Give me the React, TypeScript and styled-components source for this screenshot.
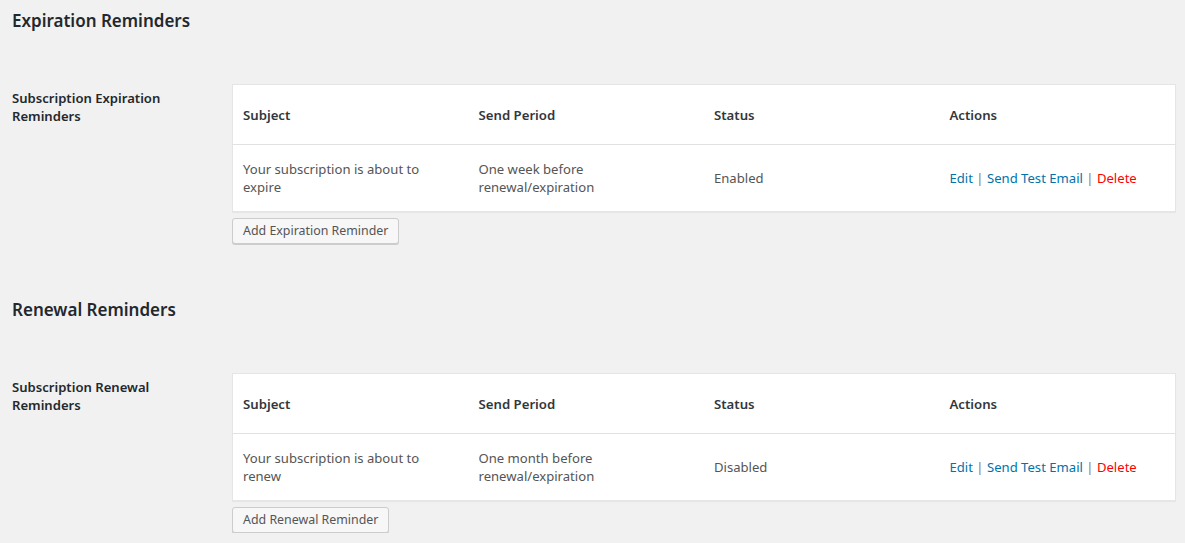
import React from "react";
import styled, { createGlobalStyle } from "styled-components";

const Global = createGlobalStyle`
  html, body { margin: 0; padding: 0; background: #f1f1f1; }
  body { font-family: "Segoe UI", "Noto Sans", "Open Sans", sans-serif; color: #444; }
`;

const Page = styled.div`
  padding: 9px 9px 0 12px;
  display: flex;
  flex-direction: column;
  gap: 54px;
`;

const Section = styled.section`
  display: flex;
  flex-direction: column;
  gap: 51px;
`;

const Heading = styled.h2`
  margin: 0;
  font-size: 17px;
  line-height: 24px;
  font-weight: 600;
  color: #23282d;
`;

const Row = styled.div`
  display: flex;
  align-items: flex-start;
`;

const Label = styled.div`
  width: 200px;
  margin-right: 20px;
  padding-top: 5px;
  font-size: 13.1px;
  line-height: 18px;
  font-weight: 600;
  color: #23282d;
`;

const Content = styled.div`
  flex: 1;
  display: flex;
  flex-direction: column;
  align-items: flex-start;
  gap: 6px;
`;

const Table = styled.table`
  width: 100%;
  table-layout: fixed;
  border-collapse: separate;
  border-spacing: 0;
  background: #fff;
  border: 1px solid #e5e5e5;
  box-shadow: 0 1px 1px rgba(0, 0, 0, 0.04);
`;

const Th = styled.th`
  text-align: left;
  font-size: 13.2px;
  font-weight: 600;
  color: #32373c;
  line-height: 20px;
  padding: 20px 10px 19px;
  border-bottom: 1px solid #e1e1e1;
`;

const Td = styled.td`
  font-size: 13.1px;
  line-height: 18px;
  color: #555;
  padding: 15px 10px;
  vertical-align: middle;
`;

const ActionLink = styled.a<{ $danger?: boolean }>`
  color: ${(p) => (p.$danger ? "#ff0000" : "#0073aa")};
  text-decoration: none;
  cursor: pointer;
`;

const Sep = styled.span`
  color: #8a7a5a;
`;

const Button = styled.button`
  font-family: inherit;
  font-size: 12.4px;
  line-height: 24px;
  height: 26px;
  padding: 0 10px;
  color: #555;
  background: #f7f7f7;
  border: 1px solid #ccc;
  border-radius: 3px;
  box-shadow: 0 1px 0 #ccc;
  cursor: pointer;
`;

type Reminder = { subject: string; period: string; status: string };

const sections: { title: string; label: string; button: string; row: Reminder }[] = [
  {
    title: "Expiration Reminders",
    label: "Subscription Expiration Reminders",
    button: "Add Expiration Reminder",
    row: {
      subject: "Your subscription is about to expire",
      period: "One week before renewal/expiration",
      status: "Enabled",
    },
  },
  {
    title: "Renewal Reminders",
    label: "Subscription Renewal Reminders",
    button: "Add Renewal Reminder",
    row: {
      subject: "Your subscription is about to renew",
      period: "One month before renewal/expiration",
      status: "Disabled",
    },
  },
];

export default function App() {
  return (
    <>
      <Global />
      <Page>
        {sections.map((s) => (
          <Section key={s.title}>
            <Heading>{s.title}</Heading>
            <Row>
              <Label>{s.label}</Label>
              <Content>
                <Table>
                  <thead>
                    <tr>
                      <Th>Subject</Th>
                      <Th>Send Period</Th>
                      <Th>Status</Th>
                      <Th>Actions</Th>
                    </tr>
                  </thead>
                  <tbody>
                    <tr>
                      <Td>{s.row.subject}</Td>
                      <Td>{s.row.period}</Td>
                      <Td>{s.row.status}</Td>
                      <Td>
                        <ActionLink>Edit</ActionLink> <Sep>|</Sep>{" "}
                        <ActionLink>Send Test Email</ActionLink> <Sep>|</Sep>{" "}
                        <ActionLink $danger>Delete</ActionLink>
                      </Td>
                    </tr>
                  </tbody>
                </Table>
                <Button>{s.button}</Button>
              </Content>
            </Row>
          </Section>
        ))}
      </Page>
    </>
  );
}
